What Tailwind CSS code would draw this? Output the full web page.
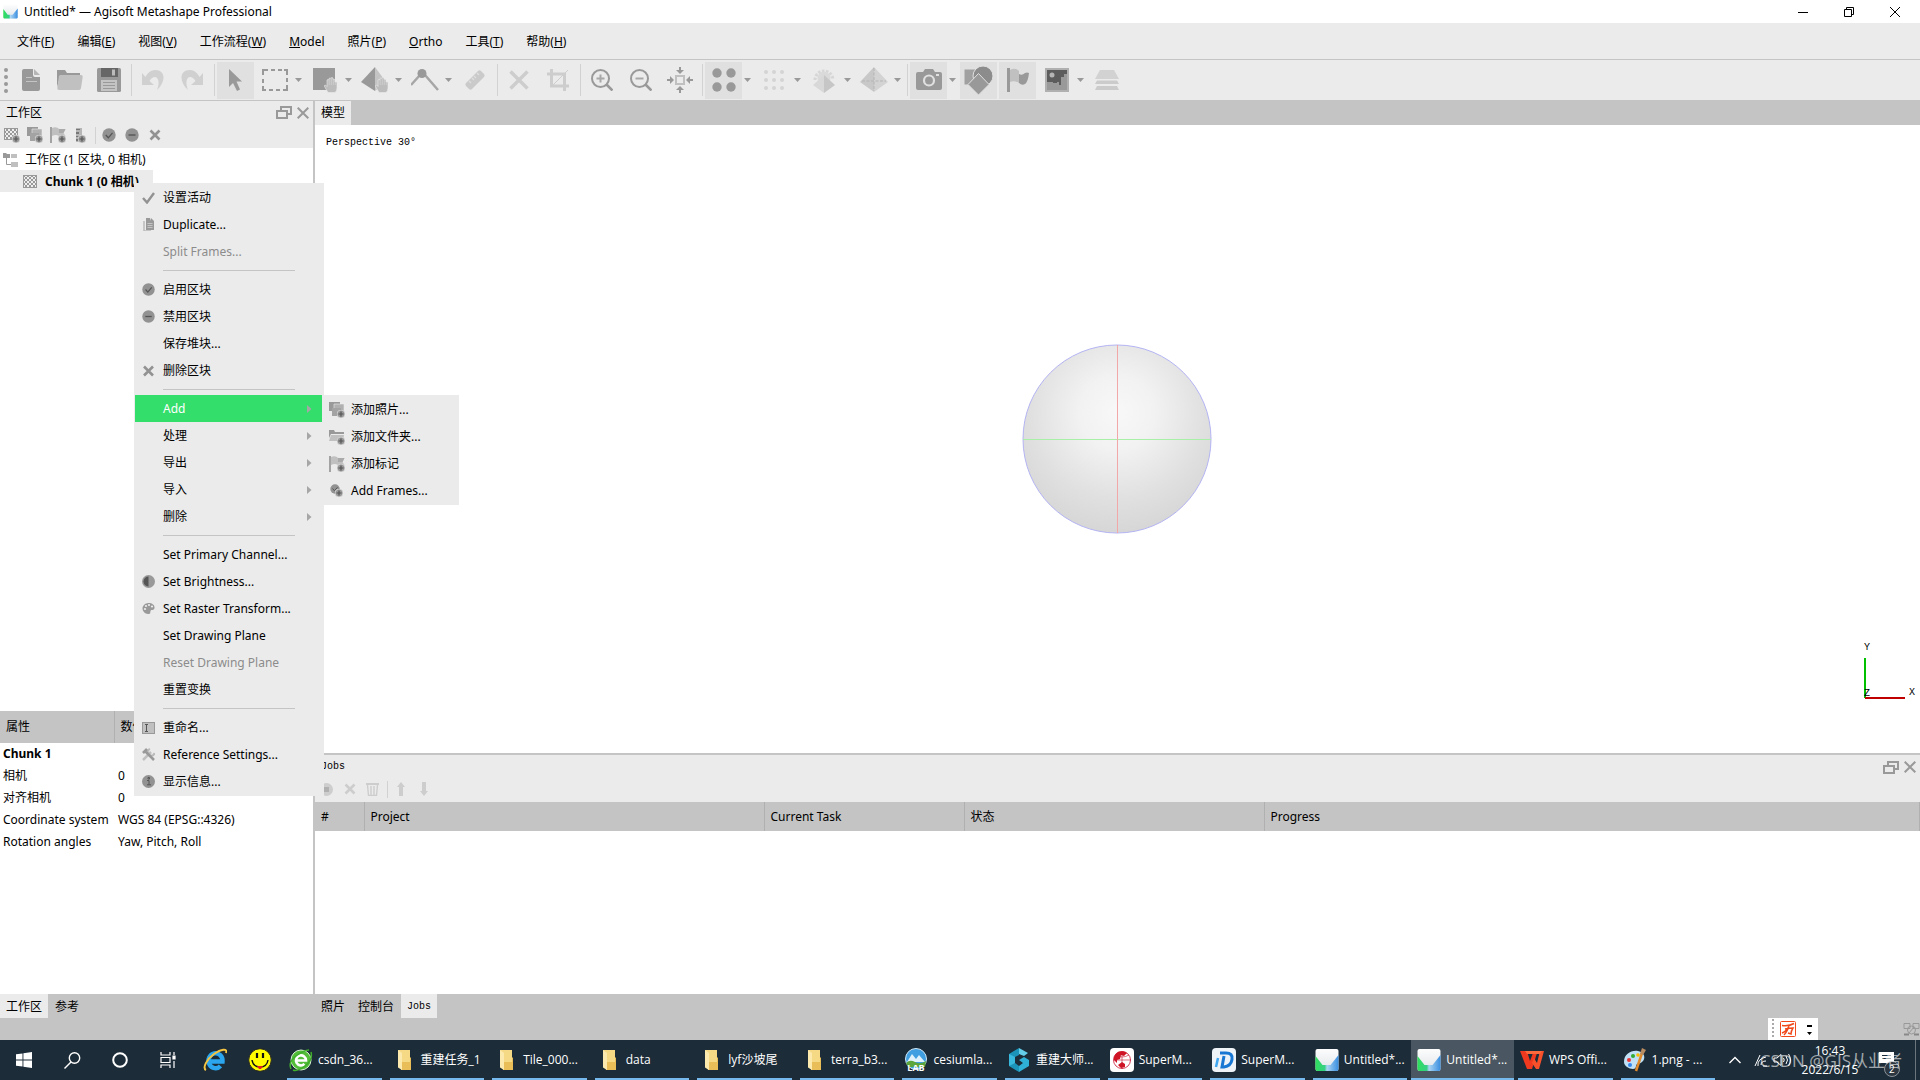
<!DOCTYPE html>
<html lang="zh-CN">
<head>
    <meta charset="UTF-8">
    <meta name="viewport" content="width=device-width, initial-scale=1.0">
    <title>Untitled* — Agisoft Metashape Professional</title>
    <script src="https://cdn.jsdelivr.net/npm/@tailwindcss/browser@4"></script>
    <style>
        body { font-family: "Noto Sans", "Noto Sans CJK SC", sans-serif; }
        .mono { font-family: "Liberation Mono", "Noto Sans CJK SC", monospace; }
        .shell { font-family: "Open Sans", "Noto Sans CJK SC", sans-serif; }
    </style>
</head>
<body class="h-screen flex flex-col overflow-hidden bg-[#ebebeb] text-black text-[12px] leading-[18px]">
    <!-- Shared icons -->
    <svg class="absolute size-0">
        <symbol id="plus" viewBox="0 0 8 8"><circle cx="4" cy="4" r="4" fill="#999" stroke="#ebebeb" stroke-width=".6"/><path d="M4 1.500v5M1.500 4h5" stroke="#555" stroke-width="1.200"/></symbol>
        <pattern id="dots" width="4" height="4" patternUnits="userSpaceOnUse"><rect width="4" height="4" fill="#eee"/><path d="M0 0h2v2H0zM2 2h2v2H2z" fill="#999"/></pattern>
        <symbol id="chunk" viewBox="0 0 14 13"><rect x=".5" y=".5" width="13" height="12" fill="url(#dots)" stroke="#999"/></symbol>
        <symbol id="photos" viewBox="0 0 16 16"><path d="M0 0h11v9H0z" fill="#999"/><path d="M5 2h10v8H5z" fill="#b0b0b0" stroke="#ebebeb" stroke-width=".6"/><path d="M3 6h9v8H3z" fill="#a3a3a3"/><use href="#plus" x="8" y="8" width="8" height="8"/></symbol>
        <symbol id="marker" viewBox="0 0 16 16"><path d="M0 0h2v16H0z" fill="#a3a3a3"/><path d="M2 1q3-1.500 6 0 .5 1 1.500 1h6l-2 4 2 3H9Q6 7 2 9z" fill="#c0c0c0"/><path d="M9 2h6.500l-2 4H9z" fill="#aaa"/><use href="#plus" x="8" y="8" width="8" height="8"/></symbol>
        <symbol id="ok" viewBox="0 0 14 14"><circle cx="7" cy="7" r="6.700" fill="#929292"/><path d="M3.800 7l2.500 2.800 4.200-5" fill="none" stroke="#555" stroke-width="1.300"/></symbol>
        <symbol id="off" viewBox="0 0 14 14"><circle cx="7" cy="7" r="6.700" fill="#929292"/><path d="M3.500 7h7" stroke="#555" stroke-width="1.400"/></symbol>
        <symbol id="cross" viewBox="0 0 12 12"><path d="M1.500 1.500l9 9M10.500 1.500l-9 9" stroke="currentColor" stroke-width="2.600"/></symbol>
        <symbol id="float" viewBox="0 0 16 13"><path d="M5 4V1h10v7h-4M1 5h10v7H1z" fill="none" stroke="#999" stroke-width="2"/></symbol>
        <symbol id="close" viewBox="0 0 12 12"><path d="M.7.7l10.600 10.600M11.300.7L.7 11.300" stroke="#999" stroke-width="2"/></symbol>
        <symbol id="down" viewBox="0 0 7 4"><path d="M0 0h7L3.500 4z" fill="#999"/></symbol>
        <symbol id="right" viewBox="0 0 5 8"><path d="M0 0l4.500 4L0 8z" fill="#a6a6a6"/></symbol>
        <symbol id="hand" viewBox="0 0 14 16"><path d="M4 15.500L.5 9.500Q0 8 1.500 8L3 9.500V3q1-1.200 2 0V1.500q1-1.200 2 0V1q1-1.200 2 0v1.500q1-1 2 .3V5q1-.8 2 .3V11q0 3-2 4.500z" fill="#bcbcbc" stroke="#ebebeb" stroke-width=".6"/><path d="M5.200 3v5M7.300 2v6M9.300 3v5M11.300 5v3" stroke="#dcdcdc" stroke-width=".5"/></symbol>
        <symbol id="folder" viewBox="0 0 14 20"><path d="M1 0h12v7l1 1v12H4z" fill="#e9bd57"/><path d="M1 0h12v12H2z" fill="#f6d985"/><path d="M1 0l4 3v17L1 17.500z" fill="#fce9ae"/></symbol>
        <linearGradient id="mgreen" x1="0" x2="1"><stop offset="0" stop-color="#2fe05a"/><stop offset=".4" stop-color="#36cf86"/><stop offset=".5" stop-color="#a9d4f3"/><stop offset="1" stop-color="#3a8ee0"/></linearGradient>
        <linearGradient id="mwhite" x1="0" y1="0" x2="0" y2="1"><stop offset="0" stop-color="#fdfdfd"/><stop offset="1" stop-color="#dfe4e8"/></linearGradient>
        <symbol id="meta" viewBox="0 0 24 24"><rect x=".5" y="1" width="23" height="22" rx="2" fill="url(#mwhite)"/><path d="M.5 8l7 9h8l8-10v14q0 2-2 2h-19q-2 0-2-2z" fill="url(#mgreen)"/></symbol>
    </svg>

    <!-- Title bar -->
    <header class="h-[23px] shrink-0 bg-white flex items-center justify-between pl-[3px] pr-[2px]">
        <div class="flex items-center gap-[6px]">
            <svg class="size-[15px]"><use href="#meta"/></svg>
            <h1>Untitled* — Agisoft Metashape Professional</h1>
        </div>
        <div class="flex">
            <button class="w-[46px] h-5 grid place-items-center" aria-label="Minimize"><svg class="size-[10px]" stroke="#000"><path d="M0 5.500h10"/></svg></button>
            <button class="w-[46px] h-5 grid place-items-center" aria-label="Restore"><svg class="size-[10px]" fill="none" stroke="#000"><path d="M.5 2.500h7v7h-7zM2.500 2V.5h7v7H8"/></svg></button>
            <button class="w-[46px] h-5 grid place-items-center" aria-label="Close"><svg class="size-[10px]" stroke="#000"><path d="M0 0l10 10M10 0L0 10"/></svg></button>
        </div>
    </header>

    <!-- Menu bar -->
    <nav class="h-[37px] shrink-0 flex items-center gap-[23px] pl-[17px] pt-px border-b border-[#c4c4c4]">
        <button>文件(<u>F</u>)</button>
        <button>编辑(<u>E</u>)</button>
        <button>视图(<u>V</u>)</button>
        <button>工作流程(<u>W</u>)</button>
        <button><u>M</u>odel</button>
        <button>照片(<u>P</u>)</button>
        <button><u>O</u>rtho</button>
        <button>工具(<u>T</u>)</button>
        <button>帮助(<u>H</u>)</button>
    </nav>

    <!-- Toolbar -->
    <div class="h-[41px] shrink-0 flex items-center gap-[2px] border-b border-[#c4c4c4]">
        <svg class="w-[10px] h-[26px]" fill="#999"><circle cx="6" cy="3" r="2"/><circle cx="6" cy="10" r="2"/><circle cx="6" cy="17" r="2"/><circle cx="6" cy="24" r="2"/></svg>
        <button class="w-[37px] h-[37px] grid place-items-center" aria-label="New"><svg class="w-[20px] h-[22px]"><path d="M1 2q0-2 2-2h9v6q0 2 2 2h5v12q0 2-2 2H3q-2 0-2-2z" fill="#999"/><path d="M13 0l6 6h-5q-1 0-1-1z" fill="#b5b5b5"/><path d="M5 8.500h6M5 12.500h11" stroke="#c4c4c4"/></svg></button>
        <button class="w-[37px] h-[37px] grid place-items-center" aria-label="Open"><svg class="w-[26px] h-[22px]"><path d="M0 1h8l2 3h13v4H3L0 18z" fill="#999"/><path d="M3 6h21q2 0 1.700 2L24 19q-.3 2-2 2H2q-2 0-1.700-2L2 7z" fill="#c0c0c0"/></svg></button>
        <button class="w-[37px] h-[37px] grid place-items-center" aria-label="Save"><svg class="size-[24px]"><rect width="24" height="24" rx="1.500" fill="#999"/><path d="M4 0h17v9H4z" fill="#666"/><path d="M15 1.500h3v6h-3z" fill="#bbb"/><path d="M4 12h16v11H4z" fill="#c4c4c4"/><path d="M6 14.500h12M6 17.500h12M6 20.500h12" stroke="#999"/></svg></button>
        <span class="w-[3px] h-8 border-r border-[#d2d2d2]"></span>
        <button class="w-[37px] h-[37px] grid place-items-center" aria-label="Undo"><svg class="size-[22px]" fill="#d0d0d0"><path d="M0 4v12h12l-4.500-4C12 4 20 8 15 21c9-8 9-20-2-20-5 0-8 4-9.500 7z"/></svg></button>
        <button class="w-[37px] h-[37px] grid place-items-center" aria-label="Redo"><svg class="size-[22px]" fill="#d0d0d0"><path d="M22 4v12H10l4.500-4C10 4 2 8 7 21-2 13-2 1 9 1c5 0 8 4 9.500 7z"/></svg></button>
        <span class="w-[3px] h-8 border-r border-[#d2d2d2]"></span>
        <button class="w-[37px] h-[37px] grid place-items-center bg-[#e0e0e0]" aria-label="Navigation"><svg class="w-[16px] h-[22px]" fill="#999"><path d="M1 0v18l4-4 4 8 3-1.500-3.500-8H14z"/></svg></button>
        <div class="flex items-center">
            <button class="w-[37px] h-[37px] grid place-items-center" aria-label="Rectangle selection"><svg class="w-[26px] h-[22px]" fill="none" stroke="#999" stroke-width="2"><path d="M1 6V1h5M9 1h4M16 1h4M22 1h3v5M25 9v4M25 16v5h-4M18 21h-4M11 21H7M4 21H1v-4M1 14v-4"/></svg></button>
            <svg class="w-[7px] h-1 ml-[2px] mr-[2px]"><use href="#down"/></svg>
        </div>
        <div class="flex items-center">
            <button class="w-[37px] h-[37px] grid place-items-center" aria-label="Region"><svg class="w-[26px] h-[26px]"><path d="M1 1h22v22H1z" fill="#999"/><use href="#hand" x="12" y="10" width="14" height="16"/></svg></button>
            <svg class="w-[7px] h-1 ml-[2px] mr-[2px]"><use href="#down"/></svg>
        </div>
        <div class="flex items-center">
            <button class="w-[37px] h-[37px] grid place-items-center" aria-label="Object"><svg class="w-[29px] h-[28px]"><path d="M15 1L1 16l14 9z" fill="#999"/><path d="M15 1l11 15-11 9z" fill="#c4c4c4"/><use href="#hand" x="15" y="11" width="14" height="16"/></svg></button>
            <svg class="w-[7px] h-1 ml-[2px] mr-[2px]"><use href="#down"/></svg>
        </div>
        <div class="flex items-center">
            <button class="w-[37px] h-[37px] grid place-items-center" aria-label="Draw polyline"><svg class="w-[28px] h-[22px]"><path d="M0 16L9 6M14 6l13 15" stroke="#a6a6a6" stroke-width="2.500"/><circle cx="11" cy="4.500" r="4.500" fill="#999"/></svg></button>
            <svg class="w-[7px] h-1 ml-[2px] mr-[2px]"><use href="#down"/></svg>
        </div>
        <button class="w-[37px] h-[37px] grid place-items-center" aria-label="Ruler"><svg class="w-[22px] h-[22px]"><path d="M2 14L14 2q1.500-1.500 3 0l3 3q1.500 1.500 0 3L8 20q-1.500 1.500-3 0l-3-3q-1.500-1.500 0-3z" fill="#cacaca"/><path d="M5 12l2 2M8 9l2 2M10 7l2 2M13 4l2 2" stroke="#dedede" stroke-width="1.300"/></svg></button>
        <span class="w-[3px] h-8 border-r border-[#d2d2d2]"></span>
        <button class="w-[37px] h-[37px] grid place-items-center" aria-label="Delete selection"><svg class="w-[20px] h-[20px]"><path d="M1.500 1.500l17 17M18.500 1.500l-17 17" stroke="#cdcdcd" stroke-width="3.500"/></svg></button>
        <button class="w-[37px] h-[37px] grid place-items-center" aria-label="Crop selection"><svg class="w-[22px] h-[22px]" fill="none" stroke="#cdcdcd" stroke-width="3"><path d="M4.500 0v17H22M0 5h17.500v17"/><path d="M21 1L5 17" stroke-width="1"/></svg></button>
        <span class="w-[3px] h-8 border-r border-[#d2d2d2]"></span>
        <button class="w-[37px] h-[37px] grid place-items-center" aria-label="Zoom in"><svg class="w-[22px] h-[22px]" fill="none" stroke="#999" stroke-width="2"><circle cx="9.500" cy="9.500" r="8.500"/><path d="M15.500 15.500l6 6" stroke-width="2.600"/><path d="M9.500 5.500v8M5.500 9.500h8" stroke="#a8a8a8"/></svg></button>
        <button class="w-[37px] h-[37px] grid place-items-center" aria-label="Zoom out"><svg class="w-[22px] h-[22px]" fill="none" stroke="#999" stroke-width="2"><circle cx="9.500" cy="9.500" r="8.500"/><path d="M15.500 15.500l6 6" stroke-width="2.600"/><path d="M5.500 9.500h8" stroke="#a8a8a8"/></svg></button>
        <button class="w-[37px] h-[37px] grid place-items-center" aria-label="Reset view"><svg class="w-[26px] h-[26px]"><path d="M9 9h8v8H9z" fill="none" stroke="#c0c0c0" stroke-width="2"/><path d="M12 0h2v3h3l-4 4-4-4h3zM12 26h2v-3h3l-4-4-4 4h3zM0 12v2h3v3l4-4-4-4v3zM26 12v2h-3v3l-4-4 4-4v3z" fill="#999"/></svg></button>
        <span class="w-[3px] h-8 border-r border-[#d2d2d2]"></span>
        <div class="flex items-center">
            <button class="w-[37px] h-[37px] grid place-items-center bg-[#e0e0e0]" aria-label="Point cloud"><svg class="w-[24px] h-[24px]" fill="#999"><circle cx="5" cy="5" r="4.700"/><circle cx="19" cy="5" r="4.700"/><circle cx="5" cy="19" r="4.700"/><circle cx="19" cy="19" r="4.700"/></svg></button>
            <svg class="w-[7px] h-1 ml-[2px] mr-[2px]"><use href="#down"/></svg>
        </div>
        <div class="flex items-center">
            <button class="w-[37px] h-[37px] grid place-items-center" aria-label="Dense cloud"><svg class="w-[22px] h-[22px]" fill="#d4d4d4"><circle cx="3" cy="3" r="2"/><circle cx="11" cy="3" r="2"/><circle cx="19" cy="3" r="2"/><circle cx="3" cy="11" r="2"/><circle cx="11" cy="11" r="2"/><circle cx="19" cy="11" r="2"/><circle cx="3" cy="19" r="2"/><circle cx="11" cy="19" r="2"/><circle cx="19" cy="19" r="2"/></svg></button>
            <svg class="w-[7px] h-1 ml-[2px] mr-[2px]"><use href="#down"/></svg>
        </div>
        <div class="flex items-center">
            <button class="w-[37px] h-[37px] grid place-items-center" aria-label="Confidence"><svg class="w-[24px] h-[28px]"><path d="M3 14a9 9 0 1 1 18 0" fill="none" stroke="#d6d6d6" stroke-width="3" stroke-dasharray="2.500 1.500"/><circle cx="12" cy="12" r="6.500" fill="#dadada"/><path d="M12 9L1 19l11 8z" fill="#d8d8d8"/><path d="M12 9l11 10-11 8z" fill="#c6c6c6"/></svg></button>
            <svg class="w-[7px] h-1 ml-[2px] mr-[2px]"><use href="#down"/></svg>
        </div>
        <div class="flex items-center">
            <button class="w-[37px] h-[37px] grid place-items-center" aria-label="Mesh"><svg class="w-[28px] h-[26px]"><path d="M14 0L0 15l14 10z" fill="#c8c8c8"/><path d="M14 0l14 15-14 10z" fill="#d3d3d3"/><path d="M2 14h24M14 1v23" stroke="#b5b5b5" stroke-dasharray="3 1.500"/></svg></button>
            <svg class="w-[7px] h-1 ml-[2px] mr-[2px]"><use href="#down"/></svg>
        </div>
        <span class="w-[3px] h-8 border-r border-[#d2d2d2]"></span>
        <div class="flex items-center">
            <button class="w-[37px] h-[37px] grid place-items-center bg-[#e0e0e0]" aria-label="Show cameras"><svg class="w-[26px] h-[22px]"><path d="M2 3h5l2-3h8l2 3h5q2 0 2 2v14q0 2-2 2H2q-2 0-2-2V5q0-2 2-2z" fill="#999"/><circle cx="13" cy="11.500" r="5" fill="none" stroke="#e0e0e0" stroke-width="2.200"/><path d="M20 5h3v2h-3z" fill="#e0e0e0"/></svg></button>
            <svg class="w-[7px] h-1 ml-[2px] mr-[2px]"><use href="#down"/></svg>
        </div>
        <button class="w-[37px] h-[37px] grid place-items-center bg-[#e0e0e0]" aria-label="Show shapes"><svg class="w-[29px] h-[29px]" stroke="#e0e0e0"><path d="M0 3h18v16H0z" fill="#a0a0a0"/><circle cx="19" cy="10" r="10" fill="#8c8c8c"/><path d="M14.500 7.500L25 18.500 14.500 29 4 18.500z" fill="#999"/></svg></button>
        <button class="w-[37px] h-[37px] grid place-items-center bg-[#e0e0e0]" aria-label="Show markers"><svg class="w-[24px] h-[24px]"><path d="M1 0h3v24H1z" fill="#999"/><path d="M4 2q5-3 9 1v12q-5-3-9-1z" fill="#c0c0c0"/><path d="M13 6q3 2 6-1 2-1 4 0-1 9-4 11-3 2-6-1z" fill="#999"/></svg></button>
        <div class="flex items-center">
            <button class="w-[37px] h-[37px] grid place-items-center" aria-label="Show images"><svg class="w-[24px] h-[24px]"><path d="M0 0h24v24H0z" fill="#b0b0b0"/><path d="M2 2h20v20H2z" fill="#5c5c5c"/><path d="M2 14h6v1h4v-1h2v3h2V9h3V6h3v16H2z" fill="#999"/><circle cx="7" cy="7" r="2.500" fill="#b5b5b5"/></svg></button>
            <svg class="w-[7px] h-1 ml-[2px] mr-[2px]"><use href="#down"/></svg>
        </div>
        <button class="w-[37px] h-[37px] grid place-items-center" aria-label="Show aligned chunks"><svg class="w-[24px] h-[20px]" fill="#d2d2d2"><path d="M5 0h14l5 9H0z"/><path d="M2 10.500h20l2 3.500H0zM2 16h20l2 4H0z" fill="#cbcbcb"/></svg></button>
    </div>

    <main class="flex-1 min-h-0 flex bg-white">
        <!-- Workspace pane -->
        <aside class="w-[315px] shrink-0 border-r-2 border-[#c4c4c4] flex flex-col">
            <div class="bg-[#ebebeb] h-[47px]">
                <div class="flex items-center justify-between h-[23px] pl-[6px] pr-1">
                    <h2>工作区</h2>
                    <div class="flex items-center gap-[5px]">
                        <button aria-label="Float"><svg class="w-[16px] h-[13px]"><use href="#float"/></svg></button>
                        <button aria-label="Close pane"><svg class="w-[12px] h-[12px]"><use href="#close"/></svg></button>
                    </div>
                </div>
                <div class="flex items-center h-[22px] text-[#929292]">
                    <button class="w-[23px] grid place-items-center" aria-label="Add chunk"><svg class="size-[16px]"><rect x=".5" y="1.500" width="13" height="11" fill="url(#dots)" stroke="#999"/><use href="#plus" x="8" y="8" width="8" height="8"/></svg></button>
                    <button class="w-[23px] grid place-items-center" aria-label="Add photos"><svg class="size-[16px]"><use href="#photos"/></svg></button>
                    <button class="w-[23px] grid place-items-center" aria-label="Add marker"><svg class="size-[16px]"><use href="#marker"/></svg></button>
                    <button class="w-[23px] grid place-items-center" aria-label="Add scale bar"><svg class="w-[10px] h-[16px]"><path d="M0 1h6v14H0z" fill="#b5b5b5"/><path d="M0 2h4v1H0zM0 5h3v2H0zM0 9h4v1H0zM0 12h3v2H0z" fill="#777"/><use href="#plus" x="2" y="8" width="8" height="8"/></svg></button>
                    <span class="w-[4px] mr-px h-[17px] border-r border-[#d2d2d2]"></span>
                    <button class="w-[23px] grid place-items-center" aria-label="Enable"><svg class="size-[14px]"><use href="#ok"/></svg></button>
                    <button class="w-[23px] grid place-items-center" aria-label="Disable"><svg class="size-[14px]"><use href="#off"/></svg></button>
                    <button class="w-[23px] grid place-items-center" aria-label="Remove"><svg class="size-[12px]"><use href="#cross"/></svg></button>
                </div>
            </div>

            <ul class="flex-1 min-h-0">
                <li class="h-[22px] flex items-center gap-[7px] pl-[3px] pt-px">
                    <svg class="w-[15px] h-[15px]"><path d="M0 1h3l1 1h3v4H0z" fill="#999"/><path d="M8 2h6v4H8zM8 10h7v5H8z" fill="#c0c0c0"/><path d="M3.500 6v6.500H8" fill="none" stroke="#999"/></svg>
                    工作区 (1 区块, 0 相机)
                </li>
                <li class="h-[22px] w-[153px] bg-[#ebebeb] flex items-center gap-[8px] pl-[23px] pt-px font-bold whitespace-nowrap">
                    <svg class="w-[14px] h-[13px]"><use href="#chunk"/></svg>
                    Chunk 1 (0 相机)
                </li>
            </ul>

            <!-- Properties -->
            <div class="h-[283px]">
                <table class="w-full table-fixed text-left">
                    <thead class="bg-[#c4c4c4]">
                        <tr class="h-[32px]">
                            <th class="w-[114px] pl-[6px] font-normal border-r border-[#b0b0b0]">属性</th>
                            <th class="pl-[6px] font-normal">数值</th>
                        </tr>
                    </thead>
                    <tbody>
                        <tr class="h-[22px]"><th class="pl-[3px]">Chunk 1</th><td></td></tr>
                        <tr class="h-[22px]"><td class="pl-[3px]">相机</td><td class="pl-1">0</td></tr>
                        <tr class="h-[22px]"><td class="pl-[3px]">对齐相机</td><td class="pl-1">0</td></tr>
                        <tr class="h-[22px]"><td class="pl-[3px] whitespace-nowrap">Coordinate system</td><td class="pl-1">WGS 84 (EPSG::4326)</td></tr>
                        <tr class="h-[22px]"><td class="pl-[3px]">Rotation angles</td><td class="pl-1">Yaw, Pitch, Roll</td></tr>
                    </tbody>
                </table>
            </div>
        </aside>

        <section class="flex-1 min-w-0 flex flex-col">
            <div class="h-[24px] shrink-0 bg-[#c4c4c4] flex"><button class="bg-[#ebebeb] px-[6px]">模型</button></div>

            <!-- Model view -->
            <div class="relative flex-1 min-h-0 grid place-items-center">
                <p class="mono absolute left-[11px] top-[9px] text-[10px]">Perspective 30°</p>
                <svg class="w-[191px] h-[190px]">
                    <defs><radialGradient id="ball" cx=".5" cy=".36" r=".66"><stop offset="0" stop-color="#f8f8f8"/><stop offset=".3" stop-color="#f2f2f2"/><stop offset=".7" stop-color="#e0e0e0"/><stop offset="1" stop-color="#d5d5d5"/></radialGradient></defs>
                    <circle cx="95" cy="95" r="94" fill="url(#ball)" stroke="#b4b4f4"/>
                    <path d="M1 95.500h188" stroke="#a8f0a8"/>
                    <path d="M95.500 1v188" stroke="#f2a8a8"/>
                </svg>
                <svg class="mono absolute right-0 bottom-[48px] w-[60px] h-[70px] text-[10px]">
                    <path d="M5 23v40" stroke="#00c000" stroke-width="2"/>
                    <path d="M5 63h40" stroke="#c00000" stroke-width="2"/>
                    <text x="4" y="15">Y</text><text x="4" y="61">Z</text><text x="49" y="60">X</text>
                </svg>
            </div>

            <!-- Jobs pane -->
            <div class="h-[241px] shrink-0 border-t-2 border-[#c4c4c4]">
                <div class="bg-[#ebebeb] h-[47px]">
                    <div class="flex items-center justify-between h-[24px] pl-[6px] pr-1">
                        <h2 class="mono text-[10px]">Jobs</h2>
                        <div class="flex items-center gap-[5px]">
                            <button aria-label="Float"><svg class="w-[16px] h-[13px]"><use href="#float"/></svg></button>
                            <button aria-label="Close pane"><svg class="w-[12px] h-[12px]"><use href="#close"/></svg></button>
                        </div>
                    </div>
                    <div class="flex items-center h-[20px] text-[#cdcdcd]">
                        <button class="w-[23px] grid place-items-center" aria-label="Stop"><svg class="size-[13px]"><circle cx="6.500" cy="6.500" r="6.500" fill="#cdcdcd"/><path d="M4 4h5v5H4z" fill="#b0b0b0"/></svg></button>
                        <button class="w-[23px] grid place-items-center" aria-label="Cancel"><svg class="size-[12px]"><use href="#cross"/></svg></button>
                        <button class="w-[23px] grid place-items-center" aria-label="Clear"><svg class="size-[13px]" fill="none" stroke="#cdcdcd"><path d="M0 1h13" stroke-width="2"/><path d="M1.500 2l1 10.500h8l1-10.500M5 3v9M8 3v9" stroke-width="1.400"/></svg></button>
                        <span class="w-[4px] mr-px h-[17px] border-r border-[#d2d2d2]"></span>
                        <button class="w-[23px] grid place-items-center" aria-label="Move up"><svg class="w-[8px] h-[14px]" fill="currentColor"><path d="M4 0l4 5H6v9H2V5H0z"/></svg></button>
                        <button class="w-[23px] grid place-items-center" aria-label="Move down"><svg class="w-[8px] h-[14px]" fill="currentColor"><path d="M4 14l4-5H6V0H2v9H0z"/></svg></button>
                    </div>
                </div>
                <table class="w-full table-fixed text-left">
                    <thead class="bg-[#c4c4c4]">
                        <tr class="h-[29px]">
                            <th class="w-[49px] pl-[6px] font-normal border-r border-[#b0b0b0]">#</th>
                            <th class="w-[400px] pl-[6px] font-normal border-r border-[#b0b0b0]">Project</th>
                            <th class="w-[200px] pl-[6px] font-normal border-r border-[#b0b0b0]">Current Task</th>
                            <th class="w-[300px] pl-[6px] font-normal border-r border-[#b0b0b0]">状态</th>
                            <th class="pl-[6px] font-normal border-r border-[#b0b0b0]">Progress</th>
                        </tr>
                    </thead>
                </table>
            </div>
        </section>
    </main>

    <!-- Pane tabs and status bar -->
    <div class="h-[46px] shrink-0 bg-[#c4c4c4] flex items-start">
        <div class="w-[315px] flex">
            <button class="h-[24px] pt-px px-[6px] bg-[#ebebeb]">工作区</button>
            <button class="h-[24px] pt-px px-[7px]">参考</button>
        </div>
        <div class="flex">
            <button class="h-[24px] pt-px px-[6px]">照片</button>
            <button class="h-[24px] pt-px px-[7px]">控制台</button>
            <button class="h-[24px] pt-px px-[6px] bg-[#ebebeb] mono text-[10px]">Jobs</button>
        </div>
        <div class="ml-auto self-end flex items-center h-[22px]">
            <!-- Input method bar -->
            <div class="w-[50px] h-full bg-white flex items-center">
                <svg class="w-[50px] h-[22px]"><path d="M5 1v20" stroke="#aaa" stroke-width="2" stroke-dasharray="2 2"/><rect x="12.500" y="3.500" width="15" height="15" rx="1" fill="#fff" stroke="#f04a1c"/><path d="M14 7.500q7 1 12-2M21 8q-2 5-7 7M17 11q4-1 8-1-2 3-2 6l-3-1M20 11q-2 4-4 6" fill="none" stroke="#f04a1c" stroke-width="1.500"/><path d="M39 7h5v2h-5zM39 14h5l-2.500 3z"/></svg>
            </div>
            <svg class="w-[17px] h-[14px] ml-[85px]" fill="none" stroke="#999"><path d="M1 1.500h6v5H1zM10 1.500h6v5h-6z"/><circle cx="8.500" cy="8" r="4"/><path d="M6 11l5-6"/><path d="M1 12.500h5M11 12.500h5" stroke="#888" stroke-width="2"/></svg>
        </div>
    </div>

    <!-- Taskbar -->
    <footer class="shell relative h-[40px] shrink-0 bg-[#1c2c38] text-white flex">
        <div class="w-[283px] flex items-center shrink-0">
            <button class="w-[48px] h-full grid place-items-center" aria-label="Start"><svg class="size-[16px]" fill="#fff"><path d="M0 2.300L6.500 1.400v6.200H0zM7.400 1.200L16 0v7.600H7.400zM0 8.400h6.500v6.200L0 13.700zM7.400 8.400H16V16l-8.600-1.200z"/></svg></button>
            <button class="w-[48px] h-full grid place-items-center" aria-label="Search"><svg class="size-[17px]" fill="none" stroke="#fff" stroke-width="1.400"><circle cx="10.500" cy="6" r="5.200"/><path d="M7 10l-6.500 6.500"/></svg></button>
            <button class="w-[48px] h-full grid place-items-center" aria-label="Cortana"><svg class="size-[16px]" fill="none" stroke="#fff" stroke-width="2"><circle cx="8" cy="8" r="6.800"/></svg></button>
            <button class="w-[48px] h-full grid place-items-center" aria-label="Task view"><svg class="size-[16px]" fill="none" stroke="#fff" stroke-width="1.200"><path d="M1 0v3h9V0M1 16v-3h9v3M1 5.500h9v5H1zM14 0v3M14 9v7"/><path d="M13 4h2v3h-2z" fill="#fff"/></svg></button>
            <button class="w-[46px] h-full grid place-items-center" aria-label="Internet Explorer"><svg class="size-[24px]" fill="none"><path d="M5.500 13.500h14A7 7.500 0 1 0 17.500 18" stroke="#2aa5ee" stroke-width="4.500"/><path d="M3 22C-1 20 4 11 11 6s14-6 12-1" stroke="#f4c443" stroke-width="2"/></svg></button>
            <button class="w-[43px] h-full grid place-items-center" aria-label="Smile"><svg class="size-[24px]"><circle cx="12" cy="12" r="11.300" fill="#fffc00" stroke="#222"/><path d="M9 5v5M15 5v5" stroke="#111" stroke-width="2.200"/><path d="M4 12q1 7 8 7t8-7" fill="none" stroke="#111" stroke-width="1.400"/><path d="M9 18h6l-2 3h-2z" fill="#e02020"/></svg></button>
        </div>

        <div class="flex-1 min-w-0 flex">
            <button class="flex-1 flex items-center gap-[5px] pl-[6px] relative whitespace-nowrap"><svg class="size-[24px]"><circle cx="12" cy="12" r="10" fill="#53bd3a" stroke="#d6efd0"/><path d="M7 12.500h10A5 5 0 1 0 15.500 16" fill="none" stroke="#fff" stroke-width="2.600"/><path d="M2 21Q-1 14 7 8T20 2M22 4q2 8-6 14T4 22" fill="none" stroke="#3fae2a" stroke-width="1.500"/></svg>csdn_36...<span class="absolute inset-x-1 bottom-0 h-[2px] bg-[#76b9ed]"></span></button>
            <button class="flex-1 flex items-center gap-[5px] pl-[6px] relative whitespace-nowrap"><svg class="w-[24px] h-[20px]"><use href="#folder"/></svg>重建任务_1<span class="absolute inset-x-1 bottom-0 h-[2px] bg-[#76b9ed]"></span></button>
            <button class="flex-1 flex items-center gap-[5px] pl-[6px] relative whitespace-nowrap"><svg class="w-[24px] h-[20px]"><use href="#folder"/></svg>Tile_000...<span class="absolute inset-x-1 bottom-0 h-[2px] bg-[#76b9ed]"></span></button>
            <button class="flex-1 flex items-center gap-[5px] pl-[6px] relative whitespace-nowrap"><svg class="w-[24px] h-[20px]"><use href="#folder"/></svg>data<span class="absolute inset-x-1 bottom-0 h-[2px] bg-[#76b9ed]"></span></button>
            <button class="flex-1 flex items-center gap-[5px] pl-[6px] relative whitespace-nowrap"><svg class="w-[24px] h-[20px]"><use href="#folder"/></svg>lyf沙坡尾<span class="absolute inset-x-1 bottom-0 h-[2px] bg-[#76b9ed]"></span></button>
            <button class="flex-1 flex items-center gap-[5px] pl-[6px] relative whitespace-nowrap"><svg class="w-[24px] h-[20px]"><use href="#folder"/></svg>terra_b3...<span class="absolute inset-x-1 bottom-0 h-[2px] bg-[#76b9ed]"></span></button>
            <button class="flex-1 flex items-center gap-[5px] pl-[6px] relative whitespace-nowrap"><svg class="size-[24px] overflow-visible"><circle cx="12" cy="11" r="10.500" fill="#3f9fe0" stroke="#cfe8f8"/><path d="M3 14l5-8 4 5 3-4 6 7z" fill="#dff1fb"/><path d="M2 15q4-4 9-1t11-1l-1 6H4z" fill="#5ba53c"/><text x="12" y="23" text-anchor="middle" class="text-[9px] font-bold" fill="#fff">LAB</text></svg>cesiumla...<span class="absolute inset-x-1 bottom-0 h-[2px] bg-[#76b9ed]"></span></button>
            <button class="flex-1 flex items-center gap-[5px] pl-[6px] relative whitespace-nowrap"><svg class="size-[24px]"><path d="M12 0L2 6v12l10 6v-6l-4-3V9l4-2z" fill="#1c93b8"/><path d="M12 0l9 5-4 3-5-2z" fill="#63cdea"/><path d="M12 12l5-3 5 3v6l-10 6v-6l4-3z" fill="#2fb0d6"/><path d="M2 6l6 3v6l-6 3z" fill="#39b9dd"/></svg>重建大师...<span class="absolute inset-x-1 bottom-0 h-[2px] bg-[#76b9ed]"></span></button>
            <button class="flex-1 flex items-center gap-[5px] pl-[6px] relative whitespace-nowrap"><svg class="size-[24px]"><rect width="24" height="24" rx="4" fill="#fff"/><circle cx="12" cy="12" r="8.500" fill="#fff" stroke="#c8102e" stroke-width=".8"/><path d="M4 12C3 4 12 1 17 5l-3 3-3-1-1 4-3 1v3zM8 17l4-3 3 2v3l-4 1z" fill="#d01525"/><path d="M12 4v17M4 12h17M6 7q6 4 13 0" stroke="#c8102e" stroke-width=".6" fill="none"/></svg>SuperM...<span class="absolute inset-x-1 bottom-0 h-[2px] bg-[#76b9ed]"></span></button>
            <button class="flex-1 flex items-center gap-[5px] pl-[6px] relative whitespace-nowrap"><svg class="size-[24px]"><rect width="24" height="24" rx="4" fill="#eef3f8"/><path d="M8 5h6q7 0 6 6.500T12 19h-2l2-11" fill="none" stroke="#1877d2" stroke-width="3"/><path d="M6 10l-2 9" stroke="#3fa6f0" stroke-width="2.500"/></svg>SuperM...<span class="absolute inset-x-1 bottom-0 h-[2px] bg-[#76b9ed]"></span></button>
            <button class="flex-1 flex items-center gap-[5px] pl-[6px] relative whitespace-nowrap"><svg class="size-[24px]"><use href="#meta"/></svg>Untitled*...<span class="absolute inset-x-1 bottom-0 h-[2px] bg-[#76b9ed]"></span></button>
            <button class="flex-1 flex items-center gap-[5px] pl-[6px] relative whitespace-nowrap bg-[#4a5762]"><svg class="size-[24px]"><use href="#meta"/></svg>Untitled*...<span class="absolute inset-x-0 bottom-0 h-[2px] bg-[#76b9ed]"></span></button>
            <button class="flex-1 flex items-center gap-[5px] pl-[6px] relative whitespace-nowrap"><svg class="size-[24px]"><path d="M0 3h7l3 10 3-8h4l-5 16H7z" fill="#f0391f"/><path d="M14 10l3 5 3-12h4l-5 18h-3l-4-6z" fill="#f9502c"/><path d="M5 3h17l-2 3H7z" fill="#ff6a3c"/></svg>WPS Offi...<span class="absolute inset-x-1 bottom-0 h-[2px] bg-[#76b9ed]"></span></button>
            <button class="flex-1 flex items-center gap-[5px] pl-[6px] relative whitespace-nowrap"><svg class="size-[24px]"><path d="M1 14C1 6 8 2 15 3s8 8 4 11-3 0-5 2 0 5-4 5-9-3-9-7z" fill="#bfe0f5"/><circle cx="6" cy="12" r="2" fill="#e33"/><circle cx="10" cy="8" r="2" fill="#3a3"/><circle cx="7" cy="17" r="2" fill="#38e"/><circle cx="15" cy="7" r="1.800" fill="#fb0"/><path d="M19 5l-6 18" stroke="#e08a2c" stroke-width="2.500"/><path d="M17 6l2-6 4 2-3 5z" fill="#b98b60"/></svg>1.png - ...<span class="absolute inset-x-1 bottom-0 h-[2px] bg-[#76b9ed]"></span></button>
        </div>

        <!-- Tray -->
        <div class="w-[201px] shrink-0 flex items-center">
            <button class="w-[31px] h-full grid place-items-center" aria-label="Hidden icons"><svg class="w-[12px] h-[8px]" fill="none" stroke="#fff" stroke-width="1.400"><path d="M.5 7L6 1.500 11.500 7"/></svg></button>
            <svg class="w-[14px] h-[14px] ml-1" fill="none" stroke="#fff"><path d="M1 13L6 2M4 13Q3 6 12 4M7 12q0-4 5-4M9 13h4"/></svg>
            <svg class="w-[18px] h-[14px] ml-[5px]" fill="none" stroke="#fff"><path d="M1 5h3l4-3.500v11L4 9H1zM10.500 5q1.500 2 0 4M13 3q3 4 0 8M15.500 1q4 6 0 12"/></svg>
            <div class="w-[78px] text-center leading-[19px]">
                <p>16:43</p>
                <p>2022/6/15</p>
            </div>
            <button class="ml-[5px] relative w-[26px] h-full" aria-label="Notifications">
                <svg class="w-[26px] h-[40px]"><path d="M5 12h15v11h-3l-2 3v-3H5z" fill="#fff"/><path d="M8 15.500h9M8 18.500h9" stroke="#1c2c38"/><circle cx="18" cy="29" r="7.500" fill="#2b3640" stroke="#8b939a"/></svg>
                <span class="absolute left-[15px] top-[19px] text-[10px] leading-[20px]">2</span>
            </button>
            <span class="ml-auto mr-1 h-full border-l border-[#6b757e]"></span>
        </div>
        <span class="absolute right-[18px] top-[9px] text-[17px] leading-[24px] text-white/60 whitespace-nowrap">CSDN @GIS从业者</span>
    </footer>

    <!-- Chunk context menu -->
    <div class="absolute left-[134px] top-[183px] w-[190px] py-px bg-[#ebebeb]" role="menu">
        <button class="w-full h-[27px] flex items-center gap-[8px] pl-[8px]"><svg class="w-[13px] h-[13px]"><path d="M1 7l4 4.500L12 2" fill="none" stroke="#929292" stroke-width="2.400"/></svg>设置活动</button>
        <button class="w-full h-[27px] flex items-center gap-[8px] pl-[8px]"><svg class="w-[13px] h-[13px]"><path d="M2 3v10h7" fill="none" stroke="#bbb" stroke-width="1.500"/><path d="M4 0h4l1 3h3v9H4z" fill="#999"/><path d="M9 0l3 3H9z" fill="#999"/><path d="M5.500 5.500h5M5.500 7.500h5M5.500 9.500h5" stroke="#c4c4c4"/></svg>Duplicate...</button>
        <button class="w-full h-[27px] flex items-center pl-[29px] text-[#8c8c8c]" disabled>Split Frames...</button>
        <hr class="my-[5px] ml-[29px] mr-[29px] border-[#c4c4c4]">
        <button class="w-full h-[27px] flex items-center gap-[8px] pl-[8px]"><svg class="w-[13px] h-[13px]"><use href="#ok"/></svg>启用区块</button>
        <button class="w-full h-[27px] flex items-center gap-[8px] pl-[8px]"><svg class="w-[13px] h-[13px]"><use href="#off"/></svg>禁用区块</button>
        <button class="w-full h-[27px] flex items-center pl-[29px]">保存堆块...</button>
        <button class="w-full h-[27px] flex items-center gap-[8px] pl-[8px]"><svg class="w-[13px] h-[12px] text-[#929292]"><use href="#cross"/></svg>删除区块</button>
        <hr class="my-[5px] ml-[29px] mr-[29px] border-[#c4c4c4]">
        <div class="pl-px pr-[2px]">
            <button class="w-full h-[27px] flex items-center justify-between pl-[28px] pr-[10px] bg-[#33de6a] text-white">Add<svg class="w-[5px] h-[8px]"><use href="#right"/></svg></button>
            <button class="w-full h-[27px] flex items-center justify-between pl-[28px] pr-[10px]">处理<svg class="w-[5px] h-[8px]"><use href="#right"/></svg></button>
            <button class="w-full h-[27px] flex items-center justify-between pl-[28px] pr-[10px]">导出<svg class="w-[5px] h-[8px]"><use href="#right"/></svg></button>
            <button class="w-full h-[27px] flex items-center justify-between pl-[28px] pr-[10px]">导入<svg class="w-[5px] h-[8px]"><use href="#right"/></svg></button>
            <button class="w-full h-[27px] flex items-center justify-between pl-[28px] pr-[10px]">删除<svg class="w-[5px] h-[8px]"><use href="#right"/></svg></button>
        </div>
        <hr class="my-[5px] ml-[29px] mr-[29px] border-[#c4c4c4]">
        <button class="w-full h-[27px] flex items-center pl-[29px]">Set Primary Channel...</button>
        <button class="w-full h-[27px] flex items-center gap-[8px] pl-[8px]"><svg class="w-[13px] h-[13px]"><circle cx="6.500" cy="6.500" r="6.500" fill="#999"/><path d="M6.500 1.500v10a5 5 0 0 1 0-10z" fill="#555"/></svg>Set Brightness...</button>
        <button class="w-full h-[27px] flex items-center gap-[8px] pl-[8px]"><svg class="w-[13px] h-[13px]"><path d="M6.500 1C10 1 13 3 12.500 6S9 7 8.500 9 9 12 6 12 .5 9 .5 6.500 3 1 6.500 1z" fill="#999"/><g fill="#ebebeb"><circle cx="3" cy="7" r="1.100"/><circle cx="4" cy="4" r="1.100"/><circle cx="7" cy="3" r="1.100"/><circle cx="10" cy="4.500" r="1.100"/></g></svg>Set Raster Transform...</button>
        <button class="w-full h-[27px] flex items-center pl-[29px]">Set Drawing Plane</button>
        <button class="w-full h-[27px] flex items-center pl-[29px] text-[#8c8c8c]" disabled>Reset Drawing Plane</button>
        <button class="w-full h-[27px] flex items-center pl-[29px]">重置变换</button>
        <hr class="my-[5px] ml-[29px] mr-[29px] border-[#c4c4c4]">
        <button class="w-full h-[27px] flex items-center gap-[8px] pl-[8px]"><svg class="w-[13px] h-[12px]"><rect x=".5" y=".5" width="12" height="11" fill="#c0c0c0" stroke="#999"/><path d="M3 2.500h3M3 9.500h3M4.500 3v6" stroke="#555"/></svg>重命名...</button>
        <button class="w-full h-[27px] flex items-center gap-[8px] pl-[8px]"><svg class="w-[13px] h-[13px]"><path d="M1 12L9 4" stroke="#c0c0c0" stroke-width="2.500"/><path d="M8 1a3.500 3.500 0 1 0 4.500 4" fill="none" stroke="#bbb" stroke-width="2"/><path d="M1 5l4-4M3 3l9 9" stroke="#999" stroke-width="2.600"/></svg>Reference Settings...</button>
        <button class="w-full h-[27px] flex items-center gap-[8px] pl-[8px]"><svg class="w-[13px] h-[13px]"><circle cx="6.500" cy="6.500" r="6.500" fill="#929292"/><path d="M6 2.500h1.500V4H6zM5 5.500h2v4M5 9.800h4" stroke="#555" fill="none"/></svg>显示信息...</button>
    </div>

    <!-- Add submenu -->
    <div class="absolute left-[323px] top-[395px] w-[136px] py-px bg-[#ebebeb]" role="menu">
        <button class="w-full h-[27px] flex items-center gap-[6px] pl-[6px]"><svg class="size-[16px]"><use href="#photos"/></svg>添加照片...</button>
        <button class="w-full h-[27px] flex items-center gap-[6px] pl-[6px]"><svg class="size-[16px]"><path d="M0 1h5l1 2h9v2H2L0 9z" fill="#999"/><path d="M2 6h13l-1 6H0z" fill="#c0c0c0"/><use href="#plus" x="8" y="8" width="8" height="8"/></svg>添加文件夹...</button>
        <button class="w-full h-[27px] flex items-center gap-[6px] pl-[6px]"><svg class="size-[16px]"><use href="#marker"/></svg>添加标记</button>
        <button class="w-full h-[27px] flex items-center gap-[6px] pl-[6px]"><svg class="size-[16px]"><circle cx="6" cy="6" r="4.700" fill="#929292"/><path d="M3.500 5.500l2 2.300 3-3.500" fill="none" stroke="#555"/><use href="#plus" x="6" y="6" width="8" height="8"/></svg>Add Frames...</button>
    </div>
</body>
</html>
